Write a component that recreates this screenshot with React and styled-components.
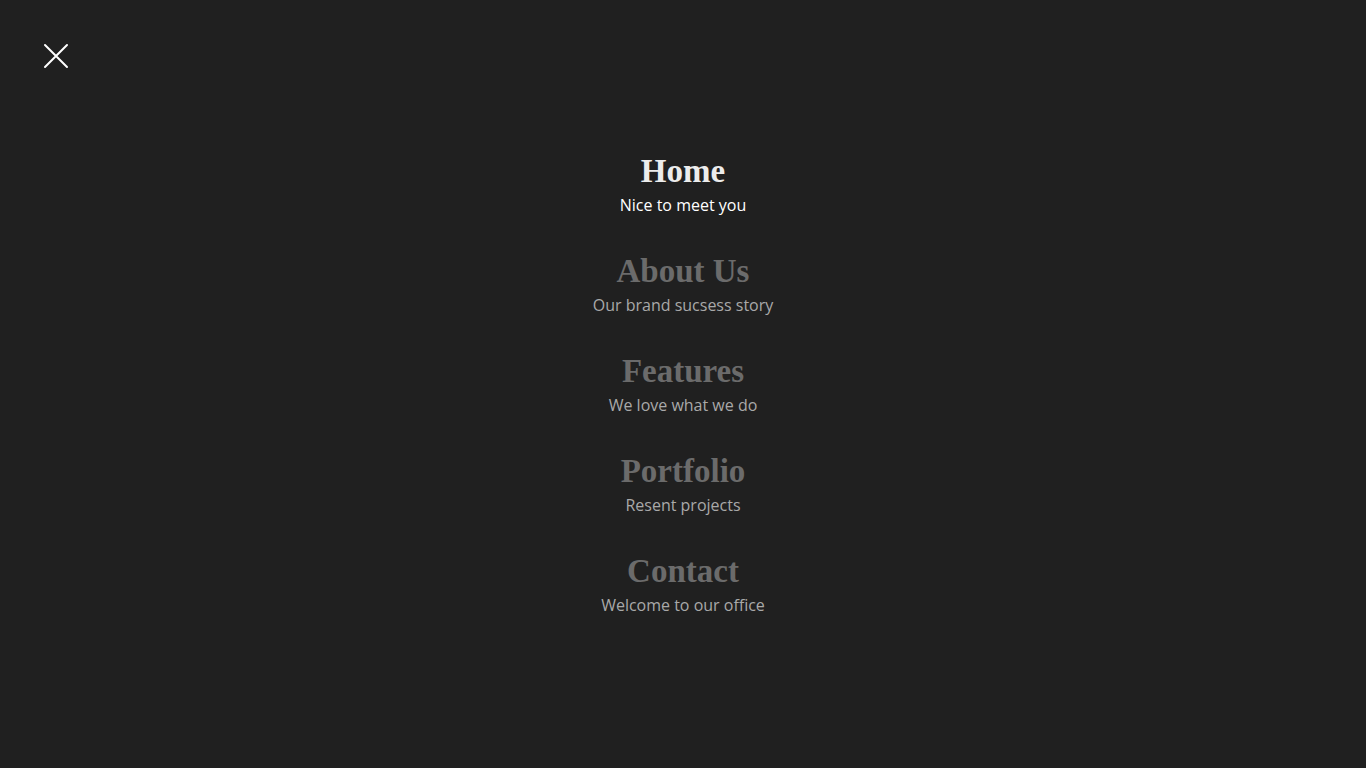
import React from 'react';
import styled, { createGlobalStyle } from 'styled-components';

const GlobalStyle = createGlobalStyle`
  html, body {
    margin: 0;
    padding: 0;
    background: #202020;
  }
`;

const items = [
    { title: 'Home', text: 'Nice to meet you', active: true },
    { title: 'About Us', text: 'Our brand sucsess story' },
    { title: 'Features', text: 'We love what we do' },
    { title: 'Portfolio', text: 'Resent projects' },
    { title: 'Contact', text: 'Welcome to our office' },
];

const Overlay = styled.div`
position: relative;
height: 100vh;
width: 100vw;
background: #202020;
display: flex;
align-items: center;
justify-content: center;
overflow: hidden;
`;

const CloseButton = styled.button`
position: absolute;
top: 40px;
left: 40px;
width: 32px;
height: 32px;
padding: 0;
border: 0;
background: transparent;
cursor: pointer;
display: flex;
align-items: center;
justify-content: center;
`;

const Menu = styled.nav`
display: flex;
flex-direction: column;
align-items: center;
gap: 38px;
`;

const Item = styled.a`
display: flex;
flex-direction: column;
align-items: center;
text-decoration: none;
cursor: pointer;
`;

const Title = styled.span`
font-family: "Liberation Serif", "DejaVu Serif", serif;
font-weight: 700;
font-size: 33px;
line-height: 36px;
color: ${props => props.active ? '#ececec' : '#6b6b6b'};
`;

const Subtitle = styled.span`
margin-top: 6px;
font-family: "Open Sans", "Liberation Sans", sans-serif;
font-size: 16px;
line-height: 20px;
color: ${props => props.active ? '#ffffff' : '#a9a9a9'};
`;

const CloseIcon = () => (
    <svg width="26" height="26" viewBox="0 0 26 26" fill="none">
        <path d="M2 2 L24 24 M24 2 L2 24" stroke="#ffffff" strokeWidth="2" strokeLinecap="round" />
    </svg>
);

export default function App() {
    return (
        <>
            <GlobalStyle />
            <Overlay>
                <CloseButton aria-label="Close menu"><CloseIcon /></CloseButton>
                <Menu>
                    {items.map(item => (
                        <Item key={item.title}>
                            <Title active={item.active}>{item.title}</Title>
                            <Subtitle active={item.active}>{item.text}</Subtitle>
                        </Item>
                    ))}
                </Menu>
            </Overlay>
        </>
    );
}
